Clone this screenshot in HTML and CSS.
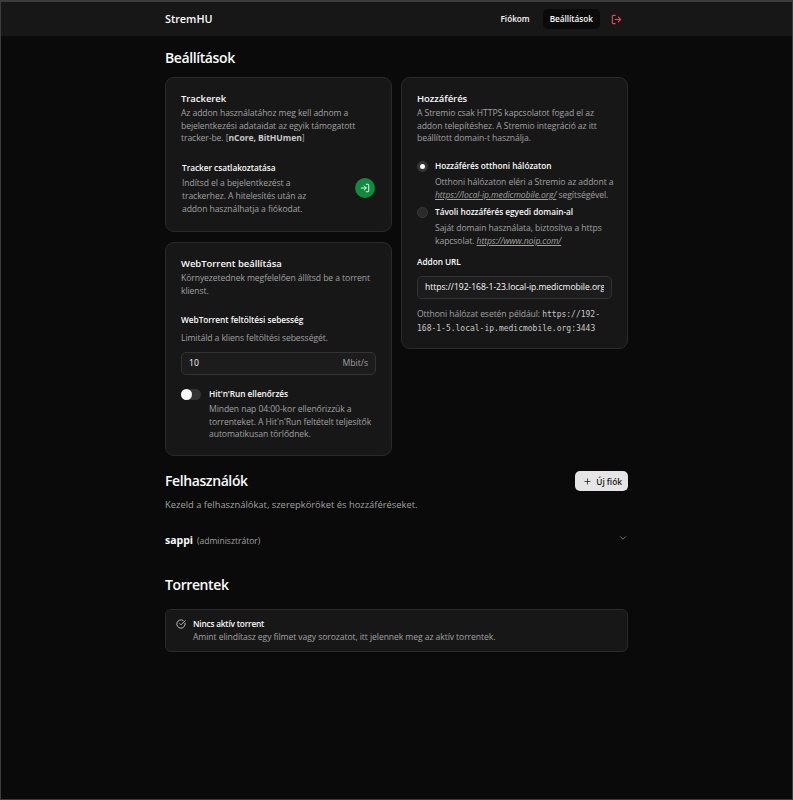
FILE: index.html
```html
<!DOCTYPE html>
<html lang="hu">
<head>
<meta charset="utf-8">
<title>StremHU</title>
<link rel="stylesheet" href="styles.css">
</head>
<body>
<header class="nav">
  <div class="nav-inner">
    <span class="brand">StremHU</span>
    <nav class="nav-links">
      <a class="nav-link">Fiókom</a>
      <a class="nav-link active">Beállítások</a>
      <svg class="logout" viewBox="0 0 24 24" fill="none" stroke="currentColor" stroke-width="2.4" stroke-linecap="round" stroke-linejoin="round"><path d="M9 21H5a2 2 0 0 1-2-2V5a2 2 0 0 1 2-2h4"/><path d="M16 17l5-5-5-5"/><path d="M21 12H9"/></svg>
    </nav>
  </div>
</header>
<main class="page">
  <h1 class="h-title settings-title">Beállítások</h1>
  <div class="columns">
    <div class="col">
      <section class="card tracker-card">
        <h2 class="card-title">Trackerek</h2>
        <p class="muted">Az addon használatához meg kell adnom a bejelentkezési adataidat az egyik támogatott tracker-be. [<b>nCore, BitHUmen</b>]</p>
        <div class="tracker-row">
          <div class="tracker-text">
            <h3 class="label">Tracker csatlakoztatása</h3>
            <p class="muted tall">Indítsd el a bejelentkezést a trackerhez. A hitelesítés után az addon használhatja a fiókodat.</p>
          </div>
          <button class="go-btn" aria-label="Csatlakozás">
            <svg viewBox="0 0 24 24" fill="none" stroke="currentColor" stroke-width="2.2" stroke-linecap="round" stroke-linejoin="round"><path d="M15 3h4a2 2 0 0 1 2 2v14a2 2 0 0 1-2 2h-4"/><path d="M10 17l5-5-5-5"/><path d="M15 12H3"/></svg>
          </button>
        </div>
      </section>
      <section class="card torrent-card">
        <h2 class="card-title">WebTorrent beállítása</h2>
        <p class="muted">Környezetednek megfelelően állítsd be a torrent klienst.</p>
        <h3 class="label upload-label">WebTorrent feltöltési sebesség</h3>
        <p class="muted upload-help">Limitáld a kliens feltöltési sebességét.</p>
        <div class="field speed-field"><span>10</span><span class="unit">Mbit/s</span></div>
        <div class="switch-row">
          <span class="switch"><span class="knob"></span></span>
          <div>
            <h3 class="label">Hit'n'Run ellenőrzés</h3>
            <p class="muted switch-help">Minden nap 04:00-kor ellenőrizzük a torrenteket. A Hit'n'Run feltételt teljesítők automatikusan törlődnek.</p>
          </div>
        </div>
      </section>
    </div>
    <div class="col">
      <section class="card access-card">
        <h2 class="card-title">Hozzáférés</h2>
        <p class="muted">A Stremio csak HTTPS kapcsolatot fogad el az addon telepítéshez. A Stremio integráció az itt beállított domain-t használja.</p>
        <div class="radio-row first">
          <span class="radio checked"><span class="dot"></span></span>
          <div>
            <h3 class="label">Hozzáférés otthoni hálózaton</h3>
            <p class="muted radio-help">Otthoni hálózaton eléri a Stremio az addont a <a class="link">https://local-ip.medicmobile.org/</a> segítségével.</p>
          </div>
        </div>
        <div class="radio-row">
          <span class="radio"></span>
          <div>
            <h3 class="label">Távoli hozzáférés egyedi domain-al</h3>
            <p class="muted radio-help">Saját domain használata, biztosítva a https kapcsolat. <a class="link">https://www.noip.com/</a></p>
          </div>
        </div>
        <h3 class="label url-label">Addon URL</h3>
        <div class="field url-field"><span class="url-text">https://192-168-1-23.local-ip.medicmobile.org</span></div>
        <p class="muted example">Otthoni hálózat esetén például: <code>https://192-168-1-5.local-ip.medicmobile.org:3443</code></p>
      </section>
    </div>
  </div>

  <div class="users-head">
    <h1 class="h-title">Felhasználók</h1>
    <button class="new-btn">
      <svg viewBox="0 0 24 24" fill="none" stroke="currentColor" stroke-width="2" stroke-linecap="round"><path d="M5 12h14"/><path d="M12 5v14"/></svg>
      Új fiók
    </button>
  </div>
  <p class="users-sub">Kezeld a felhasználókat, szerepköröket és hozzáféréseket.</p>
  <div class="user-row">
    <span class="user-name">sappi</span>
    <span class="user-role">(adminisztrátor)</span>
    <svg class="chevron" viewBox="0 0 24 24" fill="none" stroke="currentColor" stroke-width="2" stroke-linecap="round" stroke-linejoin="round"><path d="M6 9l6 6 6-6"/></svg>
  </div>
  <h1 class="h-title torrents-title">Torrentek</h1>
  <div class="alert">
    <svg class="alert-icon" viewBox="0 0 24 24" fill="none" stroke="currentColor" stroke-width="2" stroke-linecap="round" stroke-linejoin="round"><path d="M21.8 10A10 10 0 1 1 17 3.3"/><path d="M9 11l3 3L22 4"/></svg>
    <div>
      <h3 class="alert-title">Nincs aktív torrent</h3>
      <p class="muted">Amint elindítasz egy filmet vagy sorozatot, itt jelennek meg az aktív torrentek.</p>
    </div>
  </div>
</main>
</body>
</html>
```

FILE: styles.css
```css
* { box-sizing: border-box; margin: 0; padding: 0; }
html, body { height: 100%; }
body {
  background: #0a0a0a;
  color: #fafafa;
  font-family: "Open Sans", "Noto Sans", "Liberation Sans", sans-serif;
  font-size: 8.6px;
  line-height: 12.6px;
  border: 1px solid #3c3c3c;
  border-top-width: 2px;
  overflow: hidden;
}
.nav { height: 34px; background: #171717; }
.nav-inner {
  width: 463px;
  margin-left: 164px;
  height: 100%;
  display: flex;
  align-items: center;
  justify-content: space-between;
}
.brand { font-size: 10.8px; font-weight: 600; }
.nav-links { display: flex; align-items: center; gap: 6px; font-weight: 600; font-size: 8.2px; margin-right: 6px; }
.nav-link { padding: 4px 7px; border-radius: 5px; }
.nav-link.active { background: #0a0a0a; height: 20px; display: flex; align-items: center; }
.logout { width: 11px; height: 11px; color: #e04a5a; margin-left: 5px; }
.page { width: 463px; margin-left: 164px; }
.h-title { font-size: 14px; font-weight: 600; line-height: 20px; letter-spacing: -0.4px; }
.settings-title { margin-top: 12px; }
.columns { display: flex; gap: 9px; margin-top: 9px; align-items: flex-start; }
.col { width: 227px; display: flex; flex-direction: column; gap: 10px; }
.card {
  background: #171717;
  border: 1px solid #2a2a2a;
  border-radius: 9px;
  padding: 14px 15px;
}
.tracker-card { height: 155px; }
.torrent-card { height: 214px; }
.access-card { height: 272px; }
.card-title { font-size: 9.5px; font-weight: 600; line-height: 13px; margin-bottom: 2px; letter-spacing: -0.05px; }
.muted { color: #a1a1a1; font-size: 8.6px; line-height: 12.67px; letter-spacing: -0.08px; }
.muted b { font-weight: 700; color: #c8c8c8; }
.label { font-size: 8.3px; font-weight: 600; line-height: 12px; color: #fafafa; letter-spacing: -0.05px; }
.tracker-row { display: flex; align-items: center; justify-content: space-between; margin-top: 17px; padding-left: 1px; }
.tracker-text { width: 134px; }
.tracker-text .label { margin-bottom: 3px; }
.tall { line-height: 13px; }
.go-btn {
  width: 20px; height: 20px; border: 0; border-radius: 50%;
  background: #0f8a3e; color: #fff;
  display: flex; align-items: center; justify-content: center;
  margin-top: -3px; margin-right: 1px;
}
.go-btn svg { width: 10px; height: 10px; }
.upload-label { margin-top: 17px; }
.upload-help { margin-top: 6px; }
.field {
  background: #1c1c1c;
  border: 1px solid #333;
  border-radius: 5px;
  height: 23px;
  display: flex;
  align-items: center;
  padding: 0 7px;
  color: #fafafa;
}
.speed-field { justify-content: space-between; margin-top: 7px; font-weight: 500; }
.unit { color: #a1a1a1; }
.switch-row { display: flex; gap: 8px; margin-top: 13px; }
.switch {
  flex: none; width: 20px; height: 11px; border-radius: 6px; background: #333; margin-top: 1px;
  display: flex; align-items: center;
}
.knob { width: 11px; height: 11px; background: #fafafa; border-radius: 50%; }
.switch-help { margin-top: 3px; }
.radio-row { display: flex; gap: 7px; margin-top: 4px; margin-right: -5px; }
.radio-row.first { margin-top: 15px; }
.radio {
  flex: none; width: 11px; height: 11px; border-radius: 50%;
  background: #2a2a2a; border: 1px solid #3a3a3a; margin-top: 1px;
  display: flex; align-items: center; justify-content: center;
}
.radio.checked { background: #333; }
.dot { width: 5px; height: 5px; border-radius: 50%; background: #fafafa; }
.radio-help { margin-top: 4px; line-height: 13px; }
.link { font-style: italic; text-decoration: underline; }
.url-label { margin-top: 8px; }
.url-field { margin-top: 8px; overflow: hidden; }
.url-text { white-space: nowrap; overflow: hidden; width: 100%; display: block; letter-spacing: -0.05px; }
.example { margin-top: 8px; line-height: 14px; }
code { font-family: "DejaVu Sans Mono", monospace; font-size: 8px; line-height: 1; font-weight: 400; color: #c8c8c8; letter-spacing: 0; }
.users-head { display: flex; justify-content: space-between; align-items: center; margin-top: 15px; }
.new-btn {
  display: flex; align-items: center; gap: 4px;
  height: 20px; padding: 0 6px 0 8px;
  background: #e5e5e5; color: #171717;
  border: 0; border-radius: 5px;
  font: 600 8.3px "Open Sans", sans-serif;
}
.new-btn svg { width: 9px; height: 9px; }
.users-sub { color: #a1a1a1; font-size: 9.4px; line-height: 14px; margin-top: 7px; }
.user-row { display: flex; align-items: baseline; margin-top: 22px; position: relative; height: 14px; }
.user-name { font-size: 10.5px; font-weight: 700; margin-right: 4px; }
.user-role { font-size: 8.5px; color: #a1a1a1; }
.chevron { position: absolute; right: 0; top: -1px; width: 10px; height: 10px; color: #8a8a8a; }
.torrents-title { margin-top: 27px; }
.alert {
  margin-top: 14px;
  height: 43px;
  display: flex;
  gap: 7px;
  padding: 7px 10px;
  background: #171717;
  border: 1px solid #2a2a2a;
  border-radius: 6px;
}
.alert-icon { width: 10px; height: 10px; margin-top: 2px; color: #d8d8d8; flex: none; }
.alert-title { font-size: 8.3px; font-weight: 600; line-height: 13px; letter-spacing: -0.2px; }
.alert .muted { margin-top: 1px; }
```
